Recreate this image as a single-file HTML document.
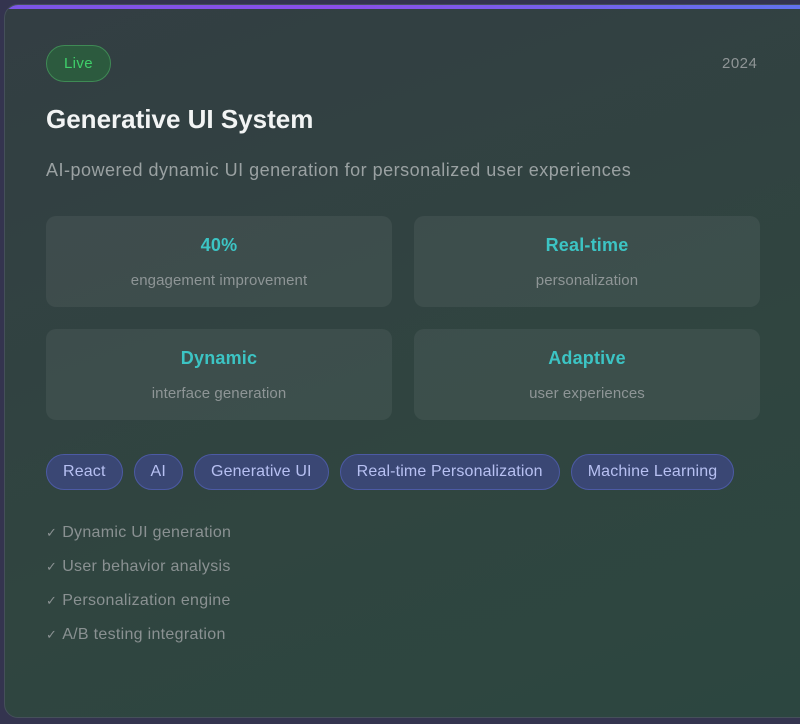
<!DOCTYPE html>
<html><head><style>
*{margin:0;padding:0;box-sizing:border-box}
body{width:800px;height:724px;overflow:hidden;background:#34344f;font-family:"Liberation Sans",sans-serif;position:relative}
.card{position:absolute;left:4px;top:4px;width:820px;height:714px;border-radius:14px;background:linear-gradient(160deg,#333e43 0%,#304540 60%,#2c4640 100%);overflow:hidden;border:1px solid #45505a}
.bar{position:absolute;left:0;top:0;right:0;height:4px;background:linear-gradient(90deg,#7b55e6,#8a4ee8 40%,#5f74ee 100%)}
.live{position:absolute;left:41px;top:40px;width:65px;height:37px;border-radius:19px;background:#2c5a3e;border:1px solid #3f8a55;color:#3fd06a;font-size:15px;text-align:center;line-height:35px;letter-spacing:0.4px}
.year{position:absolute;left:717px;top:50px;color:#8f9596;font-size:15px;letter-spacing:0.5px}
h1{position:absolute;left:41px;top:99px;color:#f2f4f4;font-size:26px;font-weight:bold;letter-spacing:0}
.desc{position:absolute;left:41px;top:155px;color:#9aa1a2;font-size:18px;letter-spacing:0.5px}
.m{position:absolute;width:346px;height:91px;border-radius:10px;background:rgba(255,255,255,0.06);text-align:center}
.m b{display:block;color:#3cc4c4;font-size:18px;margin-top:19px;letter-spacing:0.2px}
.m span{display:block;color:#8e9596;font-size:15px;margin-top:16px;letter-spacing:0.1px}
.tags{position:absolute;left:41px;top:449px;display:flex;gap:11px}
.tag{height:36px;border-radius:18px;background:#3a4774;border:1px solid #4c5aa4;color:#b7c0f2;font-size:16px;line-height:34px;padding:0 16px;letter-spacing:0.15px}
.li{position:absolute;left:41px;color:#8a9192;font-size:16px;letter-spacing:0.3px}
.li i{font-style:normal;font-size:13px;margin-right:5px}
</style></head><body>
<div class="card">
<div class="bar"></div>
<div class="live">Live</div>
<div class="year">2024</div>
<h1>Generative UI System</h1>
<div class="desc">AI-powered dynamic UI generation for personalized user experiences</div>
<div class="m" style="left:41px;top:211px"><b>40%</b><span>engagement improvement</span></div>
<div class="m" style="left:409px;top:211px"><b>Real-time</b><span>personalization</span></div>
<div class="m" style="left:41px;top:324px"><b>Dynamic</b><span>interface generation</span></div>
<div class="m" style="left:409px;top:324px"><b>Adaptive</b><span>user experiences</span></div>
<div class="tags"><div class="tag">React</div><div class="tag">AI</div><div class="tag">Generative UI</div><div class="tag">Real-time Personalization</div><div class="tag">Machine Learning</div></div>
<div class="li" style="top:519px"><i>✓</i>Dynamic UI generation</div>
<div class="li" style="top:553px"><i>✓</i>User behavior analysis</div>
<div class="li" style="top:587px"><i>✓</i>Personalization engine</div>
<div class="li" style="top:621px"><i>✓</i>A/B testing integration</div>
</div>
</body></html>
